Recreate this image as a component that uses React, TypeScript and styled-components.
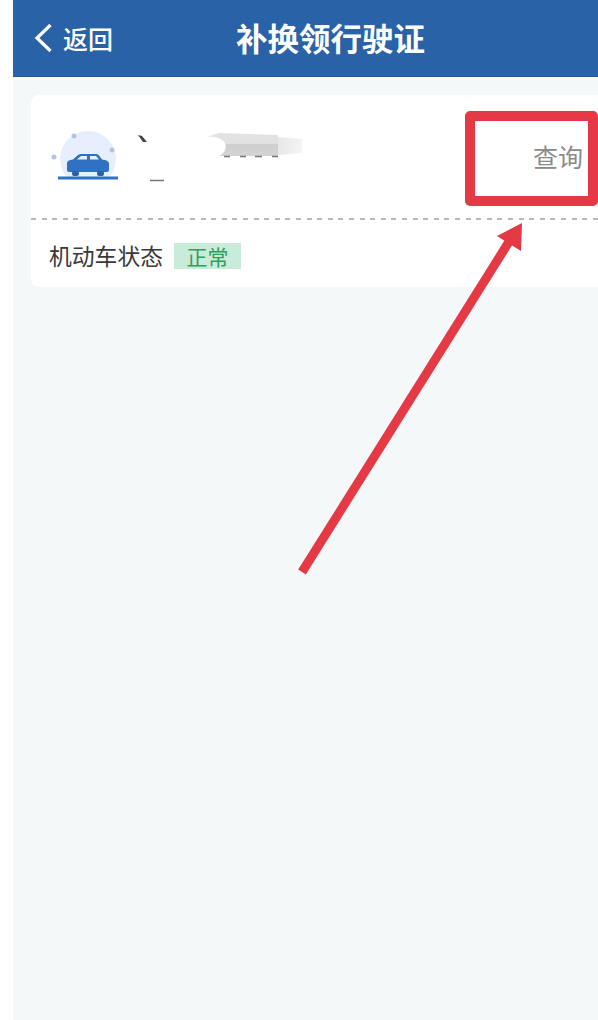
import styled, { createGlobalStyle } from "styled-components";

const GlobalStyle = createGlobalStyle`
  html, body {
    margin: 0;
    padding: 0;
    background: #ffffff;
  }
  body {
    font-family: "Noto Sans CJK SC", "Liberation Sans", sans-serif;
  }
`;

const Page = styled.div`
  position: relative;
  width: 598px;
  height: 1020px;
  overflow: hidden;
  padding-left: 13px;
  box-sizing: border-box;
  background: #ffffff;
`;

const Screen = styled.div`
  display: flex;
  flex-direction: column;
  height: 100%;
  background: #f4f8f9;
`;

const NavBar = styled.header`
  display: flex;
  align-items: center;
  flex: none;
  height: 77px;
  padding-left: 21px;
  background: #2a62a7;
  border-bottom: 1px solid #24558f;
  box-sizing: border-box;
  color: #ffffff;
`;

const BackLink = styled.a`
  display: flex;
  align-items: center;
  gap: 10px;
  width: 202px;
  flex: none;
  font-size: 25px;
  font-weight: 500;
  line-height: 1;
`;

const Title = styled.h1`
  margin: 0;
  font-size: 31.5px;
  font-weight: 700;
  line-height: 1;
  white-space: nowrap;
`;

const Content = styled.main`
  flex: 1;
  padding: 18px 0 0 18px;
`;

const Card = styled.section`
  background: #ffffff;
  border-radius: 8px 0 0 8px;
`;

const VehicleRow = styled.div`
  display: flex;
  align-items: center;
  justify-content: space-between;
  height: 123px;
  padding: 0 15px 0 20px;
  box-sizing: border-box;
`;

const VehicleInfo = styled.div`
  display: flex;
  align-items: center;
  gap: 14px;
`;

const QueryLink = styled.span`
  margin-top: -1px;
  font-size: 25px;
  line-height: 1;
  color: #8a8a8a;
`;

const Divider = styled.div`
  height: 2px;
  background: repeating-linear-gradient(
    to right,
    #b8b8b8 0,
    #b8b8b8 5px,
    transparent 5px,
    transparent 10.6px
  );
`;

const StatusRow = styled.div`
  display: flex;
  align-items: center;
  gap: 11px;
  height: 67px;
  padding: 5px 0 0 18px;
  box-sizing: border-box;
`;

const StatusLabel = styled.span`
  font-size: 22.8px;
  line-height: 1;
  color: #3a3a3a;
`;

const StatusTag = styled.span`
  display: flex;
  align-items: center;
  justify-content: center;
  width: 67px;
  height: 26px;
  font-size: 21px;
  line-height: 1;
  background: #c9ebd9;
  color: #2f9e5f;
`;

const Highlight = styled.div`
  position: absolute;
  left: 465px;
  top: 111px;
  width: 133px;
  height: 95px;
  border: 10px solid #e63946;
  border-radius: 5px;
  box-sizing: border-box;
`;

const ArrowOverlay = styled.svg`
  position: absolute;
  left: 0;
  top: 0;
  pointer-events: none;
`;

const CarIllustration = () => (
  <svg width="70" height="62" viewBox="0 0 70 62" aria-hidden="true">
    <path d="M15.600 51 A28 28 0 1 1 58.400 51 Z" fill="#e6effb" />
    <circle cx="23" cy="10" r="2.500" fill="#b4c6de" />
    <circle cx="3" cy="31" r="2.500" fill="#b4c6de" />
    <circle cx="61" cy="24" r="2.500" fill="#b4c6de" />
    <path
      d="M16 37 C16 35 18 34 22 33.500 L27 29 C28 28 29 28 31 28 L44 28 C46 28 47 28 48 29.500 L51 33.500 C55 34 58 35 58 38 L58 44 C58 45 57 46 56 46 L18 46 C17 46 16 45 16 44 Z"
      fill="#2f72c4"
    />
    <path d="M26 33.500 L30 30 L36 30 L36 33.500 Z" fill="#e6effb" />
    <path d="M39 33.500 L39 30 L45 30 L48 33.500 Z" fill="#e6effb" />
    <rect x="21" y="45" width="7" height="5" rx="2" fill="#2a62a7" />
    <rect x="46" y="45" width="7" height="5" rx="2" fill="#2a62a7" />
    <rect x="7" y="50.500" width="60" height="3" fill="#2f72c4" />
  </svg>
);

const RedactedPlate = () => (
  <svg width="170" height="66" viewBox="0 0 170 66" aria-hidden="true">
    <defs>
      <linearGradient id="smudge-body" x1="0" y1="0" x2="0" y2="1">
        <stop offset="0" stopColor="#e2e2e2" />
        <stop offset="0.45" stopColor="#e2e2e2" />
        <stop offset="0.5" stopColor="#cfcfcf" />
        <stop offset="1" stopColor="#d4d4d4" />
      </linearGradient>
      <linearGradient id="smudge-fade" x1="0" y1="0" x2="1" y2="0">
        <stop offset="0" stopColor="#e8e8e8" />
        <stop offset="1" stopColor="#f4f4f4" />
      </linearGradient>
    </defs>
    <path d="M3 11 L7 12 L12 18 L8 18 Z" fill="#444444" />
    <path d="M15 56.500 H29" stroke="#777777" strokeWidth="1.500" />
    <path d="M72 13 L84 9 L143 11 L143 32 L84 32 C90 29 92 24 90 19 C87 14 80 12 72 13 Z" fill="url(#smudge-body)" />
    <path d="M143 13 L167 15 L167 29 L143 31 Z" fill="url(#smudge-fade)" />
    <path d="M89 32.500 H95 M105 32.500 H111 M120 32.500 H127 M137 32.500 H143" stroke="#777777" strokeWidth="1.500" />
  </svg>
);

export default function App() {
  return (
    <Page>
      <GlobalStyle />
      <Screen>
        <NavBar>
          <BackLink>
            <svg width="19" height="30" viewBox="0 0 19 30" aria-hidden="true">
              <path d="M16.500 2 L3 15 L16.500 28" fill="none" stroke="#ffffff" strokeWidth="3.200" />
            </svg>
            返回
          </BackLink>
          <Title>补换领行驶证</Title>
        </NavBar>
        <Content>
          <Card>
            <VehicleRow>
              <VehicleInfo>
                <CarIllustration />
                <RedactedPlate />
              </VehicleInfo>
              <QueryLink>查询</QueryLink>
            </VehicleRow>
            <Divider />
            <StatusRow>
              <StatusLabel>机动车状态</StatusLabel>
              <StatusTag>正常</StatusTag>
            </StatusRow>
          </Card>
        </Content>
      </Screen>
      <Highlight />
      <ArrowOverlay width="598" height="1020" viewBox="0 0 598 1020" aria-hidden="true">
        <path d="M302 572 L512 237" stroke="#e63946" strokeWidth="9" fill="none" />
        <path d="M522 223 L497 236 L521 251 Z" fill="#e63946" />
      </ArrowOverlay>
    </Page>
  );
}
